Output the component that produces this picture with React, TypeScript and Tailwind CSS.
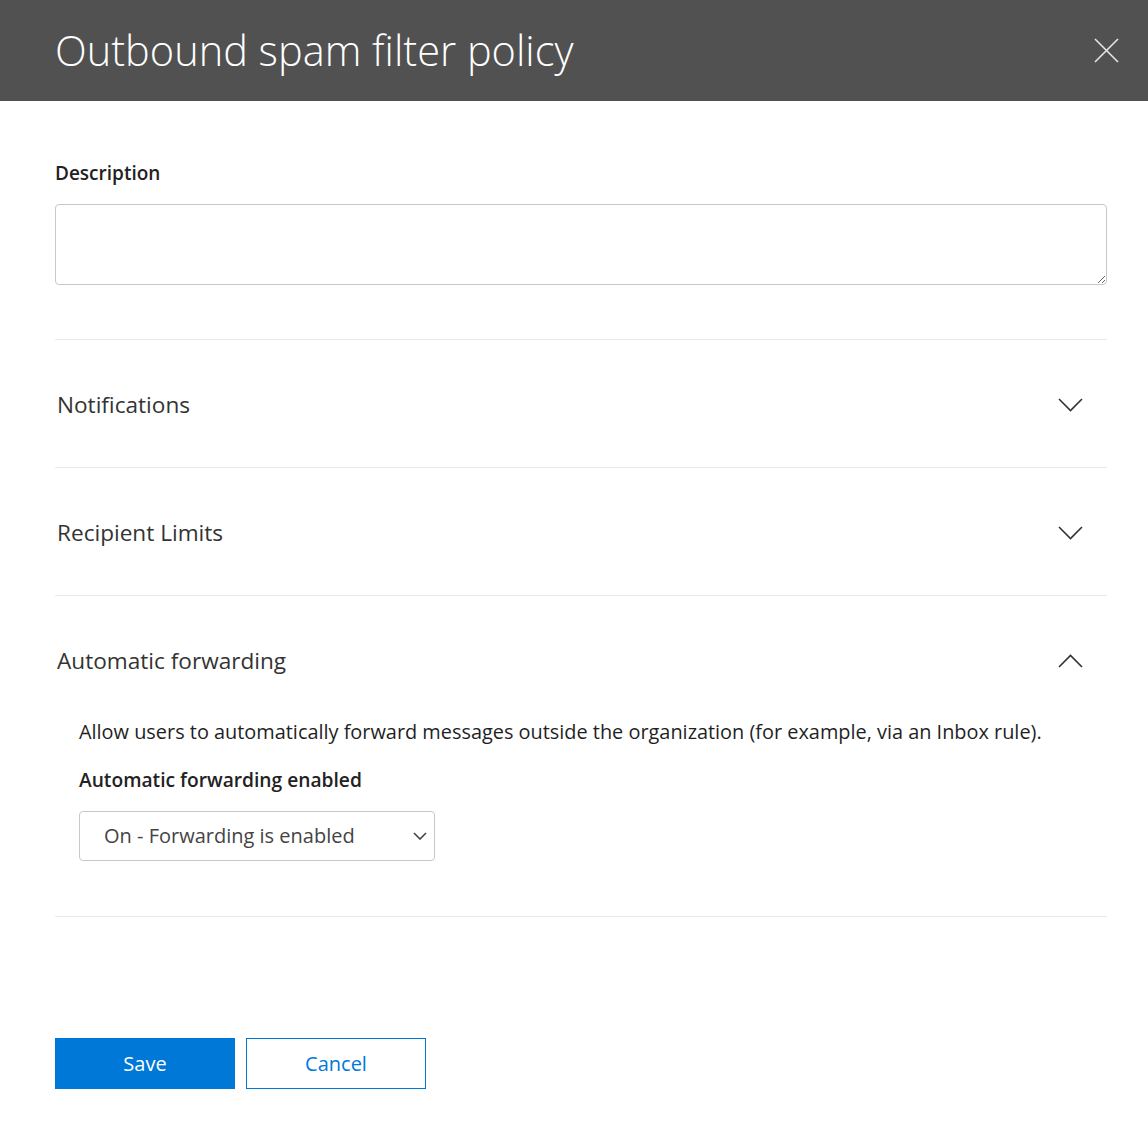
function Chevron({ up }: { up?: boolean }) {
  return (
    <svg width="25" height="14" viewBox="0 0 25 14" fill="none" className="text-[#333]">
      <polyline
        points={up ? '1,13 12.5,1.5 24,13' : '1,1 12.5,12.5 24,1'}
        stroke="currentColor"
        strokeWidth="1.6"
      />
    </svg>
  );
}

function Section({ title, open, children }: { title: string; open?: boolean; children?: React.ReactNode }) {
  return (
    <div className="border-b border-[#eaeaea]">
      <button type="button" className="flex h-[127px] w-full items-center justify-between pl-[2px] pr-[24px] pt-[3px] text-left">
        <span className="text-[22.6px] leading-[30px] text-[#333]">{title}</span>
        <Chevron up={open} />
      </button>
      {open && children}
    </div>
  );
}

export default function App() {
  return (
    <div className="min-h-[1132px] bg-white font-['Open_Sans',sans-serif] text-[#333]">
      <div className="flex h-[101px] items-center justify-between bg-[#515151] pl-[55px] pr-[29px]">
        <h1 className="text-[41.5px] font-light leading-none text-white">Outbound spam filter policy</h1>
        <svg width="25" height="25" viewBox="0 0 25 25" className="text-[#e6e6e6]">
          <path d="M1 1 L24 24 M24 1 L1 24" stroke="currentColor" strokeWidth="1.6" />
        </svg>
      </div>

      <div className="pl-[55px] pr-[41px]">
        <div className="pb-[54px] pt-[58px]">
          <label className="block text-[19px] font-semibold leading-[28px] text-[#222]">Description</label>
          <textarea className="mt-[17px] block h-[81px] w-full resize-y rounded-[4px] border border-[#c8c8c8] bg-white" />
        </div>
        <div className="border-t border-[#eaeaea]" />

        <Section title="Notifications" />
        <Section title="Recipient Limits" />
        <Section title="Automatic forwarding" open>
          <div className="-mt-[5px] pb-[55px] pl-[24px]">
            <p className="text-[19.9px] font-medium leading-[28px] text-[#1f1f1f]">
              Allow users to automatically forward messages outside the organization (for example, via an Inbox rule).
            </p>
            <p className="mt-[20px] text-[19.2px] font-semibold leading-[28px] text-[#222]">Automatic forwarding enabled</p>
            <div className="mt-[17px] flex h-[50px] w-[356px] items-center justify-between rounded-[4px] border border-[#c8c8c8] pl-[24px] pr-[7px]">
              <span className="text-[20px] text-[#444]">On - Forwarding is enabled</span>
              <svg width="14" height="8" viewBox="0 0 14 8" fill="none" className="text-[#444]">
                <polyline points="1,1 7,7 13,1" stroke="currentColor" strokeWidth="1.6" />
              </svg>
            </div>
          </div>
        </Section>

        <div className="flex gap-[11px] pt-[121px]">
          <button type="button" className="h-[51px] w-[180px] bg-[#0078d7] text-[20px] text-white">
            Save
          </button>
          <button type="button" className="h-[51px] w-[180px] border border-[#0078d7] bg-white text-[20px] text-[#0078d7]">
            Cancel
          </button>
        </div>
      </div>
    </div>
  );
}
